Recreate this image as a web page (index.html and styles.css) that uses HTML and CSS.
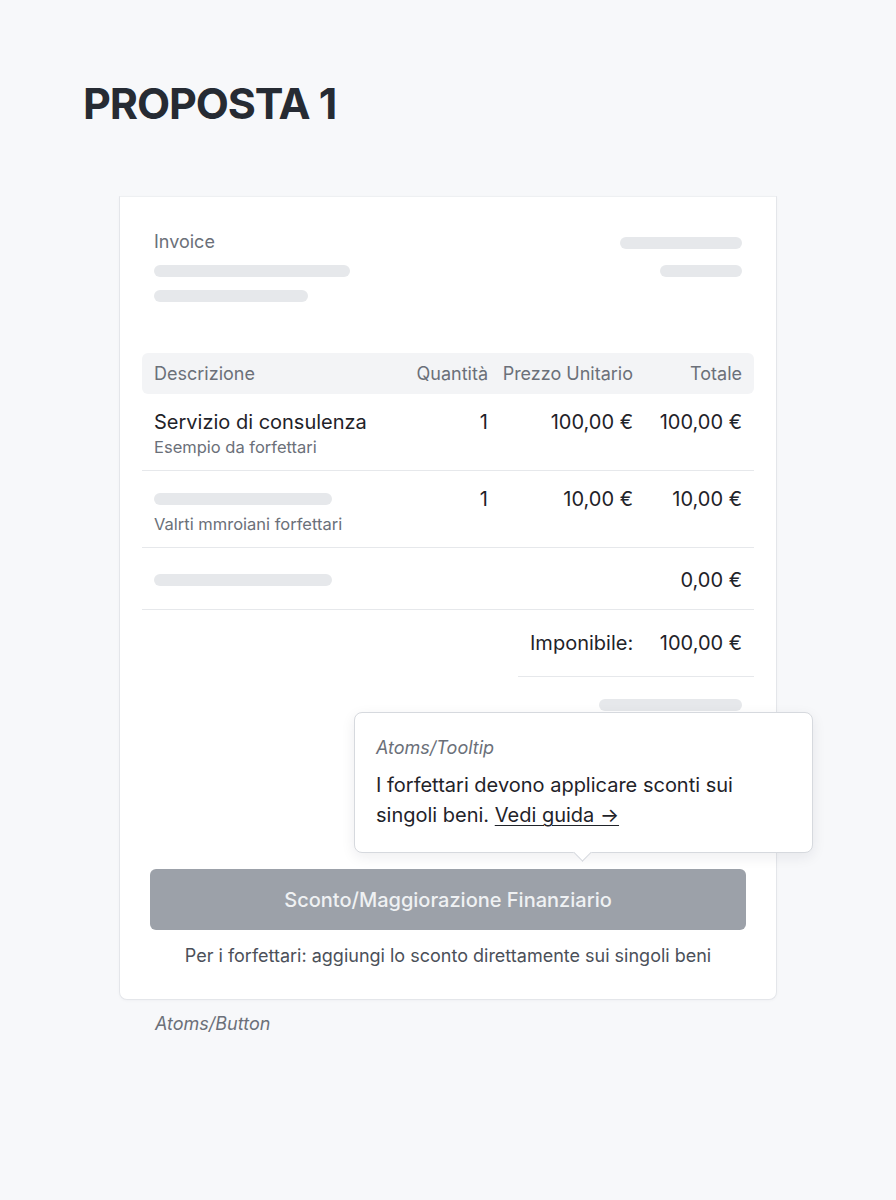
FILE: index.html
```html
<!DOCTYPE html>
<html lang="it">
<head>
<meta charset="utf-8">
<title>Proposta 1</title>
<link rel="stylesheet" href="styles.css">
</head>
<body>
<main class="page">
  <h1 class="title">PROPOSTA 1</h1>

  <section class="card">
    <div class="inv-head">
      <div class="inv-left">
        <div class="inv-label">Invoice</div>
        <div class="skel skel-196"></div>
        <div class="skel skel-154"></div>
      </div>
      <div class="inv-right">
        <div class="skel skel-122"></div>
        <div class="skel skel-82"></div>
      </div>
    </div>

    <div class="table">
      <div class="thead row-grid">
        <div>Descrizione</div>
        <div class="num">Quantità</div>
        <div class="num">Prezzo Unitario</div>
        <div class="num">Totale</div>
      </div>

      <div class="trow row-grid">
        <div class="desc">
          <div class="item-name">Servizio di consulenza</div>
          <div class="item-sub">Esempio da forfettari</div>
        </div>
        <div class="num">1</div>
        <div class="num">100,00 €</div>
        <div class="num">100,00 €</div>
      </div>

      <div class="trow row-grid">
        <div class="desc">
          <div class="item-name"><span class="skel skel-178 inline"></span></div>
          <div class="item-sub">Valrti mmroiani forfettari</div>
        </div>
        <div class="num">1</div>
        <div class="num">10,00 €</div>
        <div class="num">10,00 €</div>
      </div>

      <div class="trow trow-single row-grid">
        <div class="desc">
          <div class="item-name"><span class="skel skel-178 inline"></span></div>
        </div>
        <div></div>
        <div></div>
        <div class="num">0,00 €</div>
      </div>
    </div>

    <div class="totals">
      <div class="tot-label">Imponibile:</div>
      <div class="num">100,00 €</div>
    </div>

    <div class="action-area">
      <div class="skel skel-143 skel-right"></div>

      <div class="tooltip">
        <div class="tooltip-label">Atoms/Tooltip</div>
        <p class="tooltip-text">I forfettari devono applicare sconti sui singoli beni. <a class="tooltip-link" href="#">Vedi guida →</a></p>
      </div>

      <button class="btn" type="button" disabled>Sconto/Maggiorazione Finanziario</button>
      <p class="hint">Per i forfettari: aggiungi lo sconto direttamente sui singoli beni</p>
    </div>
  </section>

  <div class="caption">Atoms/Button</div>
</main>
</body>
</html>
```

FILE: styles.css
```css
* { box-sizing: border-box; }

html, body {
  margin: 0;
  padding: 0;
}

body {
  background: #f7f8fa;
  font-family: "Inter", "Noto Sans", "Liberation Sans", sans-serif;
  color: #1f2329;
}

.page {
  padding: 77px 0 0 83px;
  min-height: 1200px;
}

.title {
  margin: 0;
  font-size: 43px;
  line-height: 52px;
  font-weight: 700;
  color: #262b33;
  letter-spacing: -1.1px;
}

.card {
  position: relative;
  width: 658px;
  margin: 67px 0 0 36px;
  background: #ffffff;
  border: 1px solid #e4e6ea;
  border-top-color: #eef0f2;
  border-radius: 0 0 8px 8px;
  padding: 33px 22px 31px;
  box-shadow: 0 1px 3px rgba(20, 30, 50, 0.03);
}

/* header */
.inv-head {
  display: flex;
  justify-content: space-between;
  padding: 0 12px;
}

.inv-left, .inv-right {
  display: flex;
  flex-direction: column;
}

.inv-right {
  align-items: flex-end;
  padding-top: 7px;
  gap: 16px;
}

.inv-label {
  font-size: 18px;
  line-height: 24px;
  color: #6b7079;
}

.skel {
  display: block;
  height: 12px;
  border-radius: 6px;
  background: #e6e8eb;
}

.skel.inline {
  display: inline-block;
  vertical-align: middle;
}

.inv-left .skel-196 { margin-top: 11px; }
.inv-left .skel-154 { margin-top: 13px; }

.skel-196 { width: 196px; }
.skel-154 { width: 154px; }
.skel-122 { width: 122px; }
.skel-82 { width: 82px; }
.skel-178 { width: 178px; }
.skel-143 { width: 143px; }

/* table */
.table {
  margin-top: 51px;
}

.row-grid {
  display: grid;
  grid-template-columns: 1fr 80px 145px 109px;
  padding: 0 12px;
}

.num {
  text-align: right;
  white-space: nowrap;
}

.thead {
  background: #f3f4f6;
  border-radius: 6px;
  height: 41px;
  align-items: center;
  font-size: 18px;
  color: #6b7079;
}

.trow {
  padding-top: 15px;
  padding-bottom: 12px;
  border-bottom: 1px solid #e6e8eb;
  font-size: 20px;
  line-height: 26px;
  color: #1f2329;
}

.trow-single {
  padding-top: 19px;
  padding-bottom: 16px;
}

.item-name {
  height: 26px;
  display: flex;
  align-items: center;
}

.item-sub {
  margin-top: 1px;
  font-size: 16.5px;
  line-height: 22px;
  color: #6b7079;
}

/* totals */
.totals {
  width: 236px;
  margin-left: auto;
  display: grid;
  grid-template-columns: 1fr 109px;
  padding: 20px 12px 20px;
  border-bottom: 1px solid #e6e8eb;
  font-size: 20px;
  line-height: 26px;
}

.tot-label {
  text-align: right;
}

/* action area */
.action-area {
  position: relative;
  padding-top: 22px;
}

.skel-right {
  margin-left: auto;
  margin-right: 12px;
}

.tooltip {
  position: absolute;
  left: 212px;
  top: 35px;
  width: 459px;
  padding: 24px 21px 22px;
  background: #ffffff;
  border: 1px solid #d6d9de;
  border-radius: 8px;
  box-shadow: 0 4px 14px rgba(20, 30, 50, 0.08);
  z-index: 2;
}

.tooltip::after {
  content: "";
  position: absolute;
  left: 221px;
  bottom: -7px;
  width: 12px;
  height: 12px;
  background: #ffffff;
  border-right: 1px solid #d6d9de;
  border-bottom: 1px solid #d6d9de;
  transform: rotate(45deg);
}

.tooltip-label {
  font-size: 18px;
  line-height: 22px;
  font-style: italic;
  color: #6b7079;
}

.tooltip-text {
  margin: 11px 0 0;
  max-width: 400px;
  font-size: 20px;
  line-height: 30px;
  color: #1f2329;
}

.tooltip-link {
  color: #1f2329;
  text-decoration: underline;
  text-underline-offset: 3px;
  text-decoration-thickness: 1px;
}

.btn {
  display: block;
  width: 596px;
  height: 61px;
  margin: 158px 0 0 8px;
  border: none;
  border-radius: 6px;
  background: #9ca1a9;
  color: #eff1f3;
  font-family: inherit;
  font-size: 20px;
  font-weight: 500;
}

.hint {
  margin: 14px 0 0;
  text-align: center;
  font-size: 18px;
  line-height: 24px;
  color: #4b5059;
}

.caption {
  margin: 12px 0 0 72px;
  font-size: 18px;
  line-height: 24px;
  font-style: italic;
  color: #6b7079;
}
```
